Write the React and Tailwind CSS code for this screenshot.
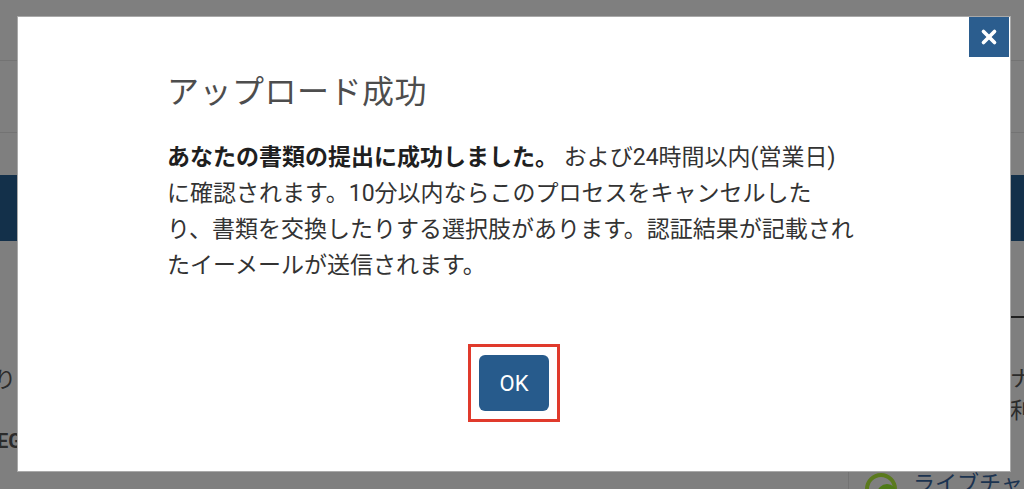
import { X } from 'lucide-react';

const jp = "font-['Roboto','Noto_Sans_CJK_JP',sans-serif]";

function Backdrop() {
  return (
    <div className="h-full flex flex-col bg-[#7f7f7f]">
      <div className="h-[61px] shrink-0 border-b border-[#737373]" />
      <div className="h-[72px] shrink-0 border-b border-[#737373]" />
      <div className="h-[42px] shrink-0" />
      <div className="h-[66px] shrink-0 bg-[#13304a]" />
      <div className="flex-1 flex justify-between">
        <div className={`pt-[128px] text-[#2b2b2b] ${jp}`}>
          <p className="text-[22px] leading-none -ml-[6px]">り</p>
          <p className="mt-[40px] text-[20px] font-bold leading-none -ml-[3px]">EG</p>
        </div>
        <div className={`flex flex-col items-end text-[#2b2b2b] ${jp}`}>
          <div className="mt-[75px] w-[14px] h-[2px] bg-[#1f1f1f]" />
          <p className="mt-[50px] text-[22px] leading-none -mr-[8px]">ナ</p>
          <p className="mt-[10px] text-[22px] leading-none -mr-[8px]">利</p>
          <div className="mt-auto flex items-end gap-2 border-l border-[#737373] pl-3 -mr-[40px] w-[216px] h-[18px] overflow-hidden">
            <svg width="44" height="30" viewBox="0 0 44 30" className="shrink-0 -mb-[12px]">
              <circle cx="20" cy="18" r="14" fill="none" stroke="#5b7a1e" strokeWidth="4" />
              <circle cx="26" cy="23" r="10" fill="#4f7a18" />
            </svg>
            <span className="text-[22px] leading-none text-[#1b3350] -mb-[6px] whitespace-nowrap">ライブチャット</span>
          </div>
        </div>
      </div>
    </div>
  );
}

export default function App() {
  return (
    <div className={`relative w-[1024px] h-[489px] overflow-hidden ${jp}`}>
      <Backdrop />

      <div className="absolute left-[17px] top-[16px] w-[994px] h-[456px] bg-white border border-[#a9a9a9]">
        <button className="absolute right-[1px] top-0 w-[40px] h-[40px] bg-[#2b5d8e] flex items-center justify-center text-white">
          <X size={22} strokeWidth={4} />
        </button>

        <div className="pl-[149px] pt-[56px]">
          <h2 className="text-[32px] leading-[38px] text-[#4d4d4d] font-normal tracking-[0.5px]">アップロード成功</h2>
          <p className="mt-[29px] text-[23px] leading-[36px] text-[#333]">
            <b className="font-bold text-[#1f1f1f]">あなたの書類の提出に成功しました。</b> および24時間以内(営業日)
            <br />
            に確認されます。10分以内ならこのプロセスをキャンセルした
            <br />
            り、書類を交換したりする選択肢があります。認証結果が記載され
            <br />
            たイーメールが送信されます。
          </p>
        </div>

        <div className="mt-[60px] flex justify-center">
          <div className="border-[3px] border-[#e03a2c] p-2">
            <button className="w-[70px] h-[56px] rounded-[6px] bg-[#275b8c] text-white text-[22px] font-['Roboto',sans-serif]">OK</button>
          </div>
        </div>
      </div>
    </div>
  );
}
